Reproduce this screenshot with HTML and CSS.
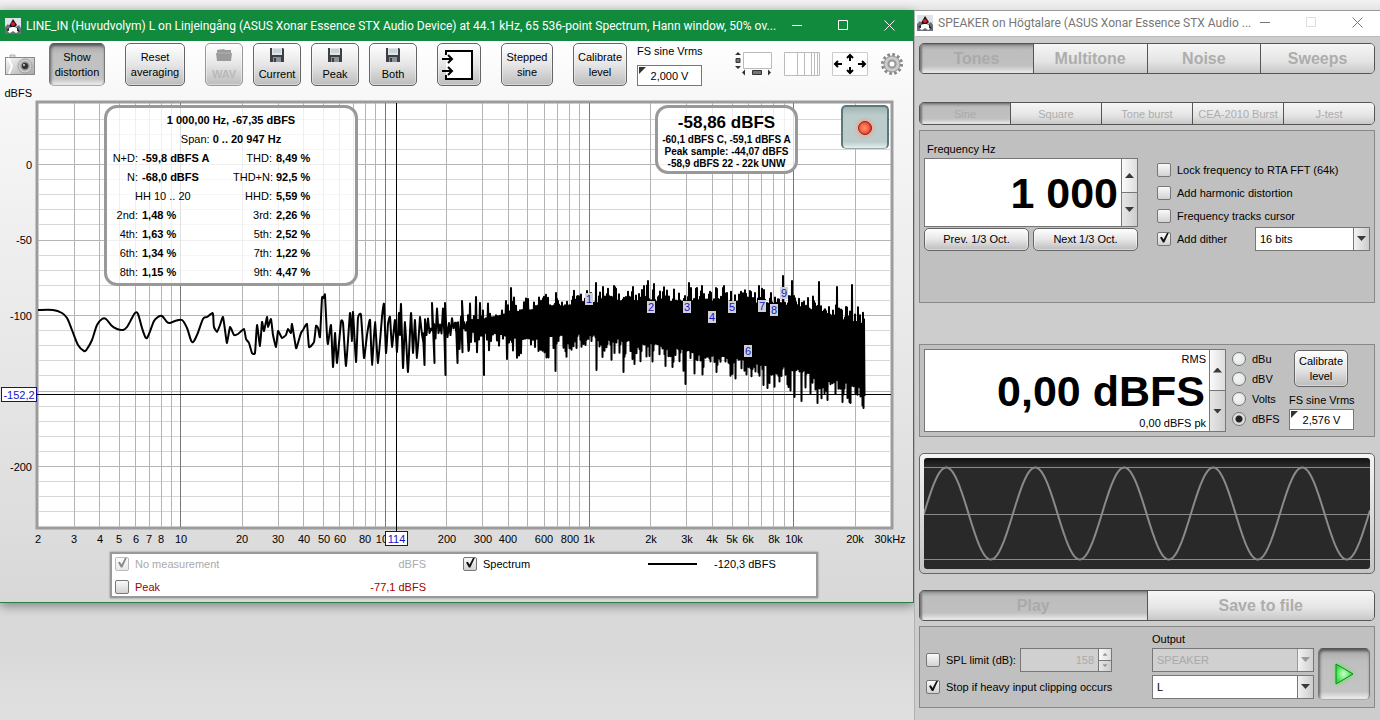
FILE: index.html
```html
<!DOCTYPE html>
<html lang="sv">
<head>
    <meta charset="UTF-8">
    <meta name="viewport" content="width=device-width, initial-scale=1.0">
    <title>RTA and generator</title>
    <link rel="stylesheet" href="styles.css">
</head>
<body>
<svg width="0" height="0" class="defs" aria-hidden="true">
    <defs>
        <linearGradient id="silver" x1="0" y1="0" x2="1" y2="1">
            <stop offset="0" stop-color="#fafafa"/>
            <stop offset="1" stop-color="#a8a8a8"/>
        </linearGradient>
        <radialGradient id="lens">
            <stop offset="0" stop-color="#222"/>
            <stop offset="0.35" stop-color="#666"/>
            <stop offset="0.7" stop-color="#bbb"/>
            <stop offset="1" stop-color="#eee"/>
        </radialGradient>
        <radialGradient id="led" cx="0.45" cy="0.5">
            <stop offset="0" stop-color="#ff9a80"/>
            <stop offset="0.7" stop-color="#fb5a3c"/>
            <stop offset="1" stop-color="#d03a20"/>
        </radialGradient>
        <radialGradient id="go" cx="0.45" cy="0.5">
            <stop offset="0" stop-color="#c8ffc8"/>
            <stop offset="1" stop-color="#2ddc38"/>
        </radialGradient>
        <filter id="glow" x="-50%" y="-50%" width="200%" height="200%">
            <feGaussianBlur stdDeviation="2.5"/>
        </filter>
        <symbol id="duke" viewBox="0 0 16 16">
            <rect width="16" height="16" fill="#dfe2e8"/>
            <path d="M0 9 3 6 5 9 11 9 14 7 16 10V16H0z" fill="#6d7078"/>
            <path d="M4 8 8 1l4 6-2 2H5z" fill="#15151a"/>
            <path d="M3 14q0-5 5-5 5 0 5 5l-2 1-3-2-3 2z" fill="#fff"/>
            <path d="M1 12l3-2v3zM12 9l3 5-3-1z" fill="#222"/>
            <circle cx="8" cy="6" r="2" fill="#d81c28"/>
        </symbol>
        <symbol id="disk" viewBox="0 0 14 14">
            <path d="M0 0h13l1 1v13H0z" fill="#3c3f44"/>
            <path d="M2 0h10v7H2z" fill="#dfe6ea"/>
            <path d="M3 2h8M3 4h8" stroke="#b5bfc6"/>
            <path d="M3 9h8v5H3z" fill="#8b9096"/>
            <path d="M4 10h2v4H4z" fill="#3c3f44"/>
        </symbol>
    </defs>
</svg>

<div class="desktop">
    <section class="window rta">
        <header class="titlebar green">
            <svg class="app-icon"><use href="#duke"/></svg>
            <span class="title">LINE_IN (Huvudvolym) L on Linjeingång (ASUS Xonar Essence STX Audio Device) at 44.1 kHz, 65 536-point Spectrum, Hann window, 50% ov...</span>
            <div class="win-buttons">
                <button aria-label="Minimize"><svg width="11" height="11"><path d="M0 5.5h10"/></svg></button>
                <button aria-label="Maximize"><svg width="11" height="11"><path d="M.5.5h9v9h-9z"/></svg></button>
                <button aria-label="Close"><svg width="11" height="11"><path d="M.5.5l10 10M10.500.5l-10 10"/></svg></button>
            </div>
        </header>

        <div class="toolbar">
            <button class="icon-btn camera" aria-label="Capture graph">
                <svg width="30" height="22" viewBox="0 0 30 22">
                    <path d="M5 1h5v3H5z" fill="#ddd" stroke="#999" stroke-width=".7"/>
                    <rect x=".5" y="3.500" width="29" height="17" fill="url(#silver)" stroke="#888"/>
                    <path d="M3 4l4 8-3 8" fill="none" stroke="#fff" stroke-width="2"/>
                    <circle cx="20" cy="12" r="7" fill="url(#lens)" stroke="#999"/>
                    <circle cx="20" cy="12" r="3" fill="#333"/>
                    <circle cx="19" cy="11" r="1" fill="#ddd"/>
                </svg>
            </button>
            <button class="btn pressed show">Show<br>distortion</button>
            <button class="btn reset">Reset<br>averaging</button>
            <div class="group">
                <button class="btn wav" disabled>
                    <svg width="16" height="14" viewBox="0 0 16 14"><path d="M1 2l7-1 1 1h6v3h1l-1 8H1L0 5h1z" fill="#9b9b9b"/><path d="M1 5h14" stroke="#b2b2b2"/></svg>
                    WAV
                </button>
                <button class="btn save"><svg width="14" height="14"><use href="#disk"/></svg>Current</button>
                <button class="btn save"><svg width="14" height="14"><use href="#disk"/></svg>Peak</button>
                <button class="btn save"><svg width="14" height="14"><use href="#disk"/></svg>Both</button>
            </div>
            <button class="btn io" aria-label="Input settings">
                <svg width="36" height="32" viewBox="0 0 36 32" fill="none" stroke="#000">
                    <path d="M5 2h26v28H5z" fill="#fff" stroke="none"/>
                    <path d="M5 6V2h26v28H5v-4" stroke-width="2"/>
                    <path d="M1 10h10M7 6l4 4-4 4M1 22h10M7 18l4 4-4 4" stroke-width="2"/>
                </svg>
            </button>
            <button class="btn stepped">Stepped<br>sine</button>
            <div class="group">
                <button class="btn calibrate">Calibrate<br>level</button>
                <div class="vrms">
                    <label for="fs-in">FS sine Vrms</label>
                    <span class="corner"><input id="fs-in" type="text" value="2,000 V"></span>
                </div>
            </div>
            <div class="view-icons">
                <button class="icon-btn" aria-label="Scrollbars">
                    <svg width="37" height="24" viewBox="0 0 37 24">
                        <path d="M8.500.5h28v16h-28z" fill="#fff" stroke="#bbb"/>
                        <path d="M3 0l3 3H0zM3 17l3-3H0zM7 20.500l3-3v6zM36 20.500l-3-3v6z" fill="#333"/>
                        <path d="M1 6.500h4v4H1zM17.500 18.500h9v4h-9z" fill="#777" stroke="#333"/>
                    </svg>
                </button>
                <button class="icon-btn" aria-label="Frequency axis">
                    <svg width="36" height="24"><path d="M.5.5h35v23H.5z" fill="#fff" stroke="#bbb"/><path d="M13.500 1v22M20.500 1v22M27.500 1v22M30.500 1v22M33.500 1v22" stroke="#bbb"/></svg>
                </button>
                <button class="icon-btn" aria-label="Graph limits">
                    <svg width="36" height="24" fill="none"><path d="M.5.5h35v23H.5z" fill="#fff" stroke="#ccc"/><path d="M18 3v6M15 6l3-3 3 3M18 21v-6M15 18l3 3 3-3M3 12h7M6 9l-3 3 3 3M33 12h-7M30 9l3 3-3 3" stroke="#000" stroke-width="2"/></svg>
                </button>
                <button class="icon-btn" aria-label="Controls">
                    <svg width="24" height="24" viewBox="-12 -12 24 24">
                        <circle r="9.500" fill="none" stroke="#888" stroke-width="3" stroke-dasharray="2.700 2.270"/>
                        <circle r="8" fill="#c4c4c4" stroke="#999"/>
                        <circle r="6" fill="none" stroke="#ccc" stroke-width="2"/>
                        <circle r="3.500" fill="#fff" stroke="#999" stroke-width="2"/>
                    </svg>
                </button>
            </div>
        </div>

        <div class="chart">
            <svg id="graph"></svg>
            <table class="info distortion">
                <colgroup><col class="name"><col class="left-val"><col class="name2"><col></colgroup>
                <tr><td colspan="4" class="mid"><b>1 000,00 Hz, -67,35 dBFS</b></td></tr>
                <tr><td colspan="4" class="mid">Span: <b>0 .. 20 947 Hz</b></td></tr>
                <tr><th>N+D:</th><td>-59,8 dBFS A</td><th>THD:</th><td>8,49 %</td></tr>
                <tr><th>N:</th><td>-68,0 dBFS</td><th>THD+N:</th><td>92,5 %</td></tr>
                <tr><th colspan="2" class="hh">HH 10 .. 20</th><th>HHD:</th><td>5,59 %</td></tr>
                <tr><th>2nd:</th><td>1,48 %</td><th>3rd:</th><td>2,26 %</td></tr>
                <tr><th>4th:</th><td>1,63 %</td><th>5th:</th><td>2,52 %</td></tr>
                <tr><th>6th:</th><td>1,34 %</td><th>7th:</th><td>1,22 %</td></tr>
                <tr><th>8th:</th><td>1,15 %</td><th>9th:</th><td>4,47 %</td></tr>
            </table>
            <div class="info level">
                <strong>-58,86 dBFS</strong>
                <span>-60,1 dBFS C, -59,1 dBFS A</span>
                <span>Peak sample: -44,07 dBFS</span>
                <span>-58,9 dBFS 22 - 22k UNW</span>
            </div>
            <button class="record" aria-label="Record">
                <svg width="22" height="22" viewBox="-11 -11 22 22"><circle r="8.500" fill="#e9a58f" filter="url(#glow)"/><circle r="6.500" fill="url(#led)" stroke="#8f2a1a"/></svg>
            </button>
        </div>

        <div class="legend">
            <label class="muted"><input type="checkbox" checked disabled>No measurement</label>
            <span class="muted value">dBFS</span>
            <label><input type="checkbox" checked>Spectrum</label>
            <span class="swatch"></span>
            <span>-120,3 dBFS</span>
            <label class="peak"><input type="checkbox">Peak</label>
            <span class="peak value">-77,1 dBFS</span>
        </div>
    </section>

    <section class="window generator">
        <header class="titlebar">
            <svg class="app-icon"><use href="#duke"/></svg>
            <span class="title">SPEAKER on Högtalare (ASUS Xonar Essence STX Audio ...</span>
            <div class="win-buttons">
                <button aria-label="Minimize"><svg width="11" height="11"><path d="M0 5.500h10"/></svg></button>
                <button aria-label="Maximize" disabled><svg width="11" height="11"><path d="M.5.5h9v9h-9z"/></svg></button>
                <button aria-label="Close"><svg width="11" height="11"><path d="M.5.5l10 10M10.500.5l-10 10"/></svg></button>
            </div>
        </header>

        <div class="gen-body">
            <div class="tabs big">
                <button class="on" disabled>Tones</button>
                <button disabled>Multitone</button>
                <button disabled>Noise</button>
                <button disabled>Sweeps</button>
            </div>
            <div class="tabs small">
                <button class="on" disabled>Sine</button>
                <button disabled>Square</button>
                <button disabled>Tone burst</button>
                <button disabled>CEA-2010 Burst</button>
                <button disabled>J-test</button>
            </div>

            <div class="panel tone">
                <div class="freq">
                    <label for="freq">Frequency Hz</label>
                    <div class="field">
                        <input id="freq" type="text" value="1 000">
                        <div class="spin"><button aria-label="Up"></button><button aria-label="Down"></button></div>
                    </div>
                    <div class="oct">
                        <button class="btn">Prev. 1/3 Oct.</button>
                        <button class="btn">Next 1/3 Oct.</button>
                    </div>
                </div>
                <div class="options">
                    <label><input type="checkbox">Lock frequency to RTA FFT (64k)</label>
                    <label><input type="checkbox">Add harmonic distortion</label>
                    <label><input type="checkbox">Frequency tracks cursor</label>
                    <div class="dither">
                        <label><input type="checkbox" checked>Add dither</label>
                        <span class="select"><select aria-label="Dither bits"><option>16 bits</option></select></span>
                    </div>
                </div>
            </div>

            <div class="panel output-level">
                <div class="field">
                    <div class="readout">
                        <label for="rms">RMS</label>
                        <input id="rms" type="text" value="0,00 dBFS">
                        <span>0,00 dBFS pk</span>
                    </div>
                    <div class="spin"><button aria-label="Up"></button><button aria-label="Down"></button></div>
                </div>
                <div class="units">
                    <label><input type="radio" name="unit">dBu</label>
                    <label><input type="radio" name="unit">dBV</label>
                    <label><input type="radio" name="unit">Volts</label>
                    <label><input type="radio" name="unit" checked>dBFS</label>
                </div>
                <div class="cal">
                    <button class="btn">Calibrate<br>level</button>
                    <label for="fs-out">FS sine Vrms</label>
                    <span class="corner"><input id="fs-out" type="text" value="2,576 V"></span>
                </div>
            </div>

            <div class="scope">
                <svg id="wave" viewBox="0 0 446 111" preserveAspectRatio="none"></svg>
            </div>

            <div class="tabs big play-tabs">
                <button class="on" disabled>Play</button>
                <button disabled>Save to file</button>
            </div>

            <div class="panel transport">
                <div class="limits">
                    <div class="spl">
                        <label><input type="checkbox">SPL limit (dB):</label>
                        <div class="field off">
                            <input type="text" value="158" aria-label="SPL limit" disabled>
                            <div class="spin"><button aria-label="Up" disabled></button><button aria-label="Down" disabled></button></div>
                        </div>
                    </div>
                    <label><input type="checkbox" checked>Stop if heavy input clipping occurs</label>
                </div>
                <div class="outputs">
                    <label for="dev">Output</label>
                    <span class="select off"><select id="dev" disabled><option>SPEAKER</option></select></span>
                    <span class="select"><select aria-label="Channel"><option>L</option></select></span>
                </div>
                <button class="btn pressed play" aria-label="Play">
                    <svg width="36" height="36" viewBox="0 0 36 36"><path d="M10 7l18 11-18 11z" fill="#60e060" filter="url(#glow)"/><path d="M10 8l17 10-17 10z" fill="url(#go)" stroke="#0f8a1c"/></svg>
                </button>
            </div>
        </div>
    </section>
</div>
<script src="graph.js"></script>
</body>
</html>
```
FILE: styles.css
```css
* {
    box-sizing: border-box;
}

body {
    margin: 0;
    background: #d9d9d9;
    font-family: "Liberation Sans", Arial, sans-serif;
    font-size: 11px;
    line-height: 14px;
    color: #000;
    overflow: hidden;
}

button, input, select {
    font: inherit;
    color: inherit;
    margin: 0;
    padding: 0;
}

.defs {
    position: absolute;
}

.desktop {
    display: grid;
    grid-template-columns: minmax(0, 1fr) 466px;
    align-items: start;
    height: 100vh;
    padding-top: 10px;
    background: linear-gradient(#f2f2f2, #e4e4e4 10px, #d9d9d9 90%, #e0e0e0);
}

/* Windows */
.window {
    display: flex;
    flex-direction: column;
}

.rta {
    height: calc(100vh - 127px);
    border: solid #2a7f48;
    border-width: 0 1px 1px 0;
    background: linear-gradient(#fff 30px, #f8f8f8 80px, #d8d8d8 100%);
    box-shadow: 0 3px 10px rgba(0, 0, 0, 0.4);
}

.generator {
    height: 100%;
    background: #cdcdcd;
    border-left: 1px solid #b0b0b0;
    border-top: 1px solid #999;
}

.titlebar {
    display: flex;
    align-items: center;
    height: 26px;
    padding-left: 2px;
    background: #fff;
    color: #777;
    font-family: Roboto, "Open Sans", sans-serif;
    font-size: 12px;
    border-bottom: 1px solid #bbb;
}

.generator .titlebar {
    padding-bottom: 2px;
}

.titlebar.green {
    height: 31px;
    padding-left: 5px;
    background: #128a3e;
    color: #fff;
    border: 0;
}

.app-icon {
    flex: none;
    width: 16px;
    height: 16px;
}

.title {
    flex: 1;
    min-width: 0;
    margin-left: 5px;
    white-space: nowrap;
}

.win-buttons {
    display: flex;
    gap: 10px;
    padding-right: 5px;
}

.green .win-buttons {
    padding-right: 6px;
}

.win-buttons button {
    display: grid;
    place-items: center;
    width: 36px;
    height: 24px;
    border: 0;
    background: none;
}

.win-buttons svg {
    fill: none;
    stroke: currentColor;
}

.win-buttons button:disabled {
    color: #ddd;
}

/* Buttons */
.btn {
    border: 1px solid #666;
    border-radius: 5px;
    background: linear-gradient(#fff, #e6e6e6 50%, #bcbcbc);
    box-shadow: inset 0 0 0 1px rgba(255, 255, 255, 0.4);
    line-height: 15px;
    white-space: nowrap;
}

.btn.pressed {
    border-color: #555 #777 #aaa;
    background: linear-gradient(#a8a8a8, #bfbfbf 25%, #c4c4c4 85%, #eee);
    box-shadow: inset 1px 2px 3px rgba(0, 0, 0, 0.5);
}

.btn:disabled {
    color: #b8b8b8;
    border-color: #999;
}

.icon-btn {
    display: block;
    border: 0;
    background: none;
}

.icon-btn svg {
    display: block;
}

/* Toolbar */
.toolbar {
    display: flex;
    align-items: flex-start;
    gap: 20px;
    height: 47px;
    padding: 2px 9px 0 5px;
}

.toolbar .btn {
    flex: none;
    height: 43px;
}

.camera {
    margin: 11px -6px 0 0;
}

.group {
    display: flex;
    gap: 10px;
}

.show { width: 56px; }
.reset { width: 60px; }
.toolbar .wav { width: 38px; font-weight: bold; }
.save { width: 48px; }
.io { width: 44px; }
.stepped { width: 52px; }
.calibrate { width: 54px; }

.wav, .save {
    display: flex;
    flex-direction: column;
    align-items: center;
    justify-content: center;
    gap: 5px;
}

.io svg {
    display: block;
    margin: auto;
}

.vrms {
    width: 65px;
}

.vrms label {
    display: block;
    margin: 1px 0 7px;
    white-space: nowrap;
}

.corner {
    position: relative;
    display: block;
}

.corner::before {
    content: "";
    position: absolute;
    left: 2px;
    top: 2px;
    width: 7px;
    height: 7px;
    background: #333;
    clip-path: polygon(0 0, 100% 0, 0 100%);
}

.corner input {
    display: block;
    width: 65px;
    height: 21px;
    border: 1px solid #777;
    background: #fff;
    text-align: center;
}

.view-icons {
    display: flex;
    gap: 12px;
    margin: 9px 0 0 auto;
}

/* Graph */
.chart {
    position: relative;
    flex: 1;
    min-height: 0;
}

#graph {
    display: block;
    width: 100%;
    height: 100%;
}

.info {
    position: absolute;
    top: 17px;
    border: 3px solid #999;
    border-radius: 13px;
    background: rgba(255, 255, 255, 0.78);
}

.distortion {
    left: 104px;
    width: 254px;
    height: 181px;
    padding: 2px 0;
    border-spacing: 0;
    table-layout: fixed;
}

.distortion td, .distortion th {
    height: 19px;
    padding: 0;
    font-weight: normal;
    text-align: right;
    white-space: nowrap;
}

.distortion td {
    padding-left: 4px;
    font-weight: bold;
    text-align: left;
}

.distortion .mid {
    padding: 0;
    font-weight: normal;
    text-align: center;
}

.distortion .name { width: 31px; }
.distortion .left-val { width: 95px; }
.distortion .name2 { width: 39px; }

.distortion .hh {
    padding-left: 28px;
    text-align: left;
}

.level {
    right: 115px;
    width: 143px;
    height: 69px;
    padding-top: 6px;
    display: flex;
    flex-direction: column;
    align-items: center;
    font-size: 10px;
    font-weight: bold;
    line-height: 12px;
    white-space: nowrap;
}

.level strong {
    font-size: 17px;
    line-height: 18px;
    margin-bottom: 2px;
}

.record {
    position: absolute;
    top: 17px;
    right: 24px;
    width: 48px;
    height: 44px;
    border: 2px solid #5c7878;
    border-bottom: 1px solid #99aaaa;
    border-radius: 5px;
    background: linear-gradient(#9fb3b3, #bccccc 20%, #bccccc 85%, #e6eeee);
}

.record svg {
    display: block;
    margin: auto;
}

/* Checkboxes and radios */
label {
    display: flex;
    align-items: center;
    white-space: nowrap;
}

input[type="checkbox"], input[type="radio"] {
    appearance: none;
    position: relative;
    flex: none;
    width: 14px;
    height: 14px;
    margin-right: 6px;
    border: 1px solid #777;
    border-radius: 2px;
    background: linear-gradient(#fafafa, #d2d2d2);
}

input[type="checkbox"]:checked::after {
    content: "";
    position: absolute;
    left: 2px;
    top: 0;
    width: 9px;
    height: 10px;
    background: #111;
    clip-path: polygon(0 50%, 20% 42%, 40% 70%, 80% 0, 100% 0, 48% 100%, 32% 100%);
}

input[type="checkbox"]:disabled {
    opacity: 0.5;
}

input[type="radio"] {
    border-radius: 50%;
    background: radial-gradient(circle at 40% 40%, #f4f6f7, #dcdfe1);
}

input[type="radio"]:checked {
    background: radial-gradient(circle, #222 3px, #ddd 4px);
}

.legend {
    display: grid;
    grid-template-columns: 220px 91px 222px 49px 1fr;
    grid-auto-rows: 23px;
    align-items: center;
    align-content: center;
    height: 46px;
    margin: 4px 95px 4px 110px;
    padding: 0 3px;
    border: 2px solid #999;
    background: #fff;
    box-shadow: 0 0 2px #888;
}

.legend label:nth-of-type(2) {
    margin-left: 37px;
}

.legend .value {
    text-align: right;
}

.muted { color: #aaa; }
.peak { color: #a00000; }

.swatch {
    height: 2px;
    background: #000;
}

.swatch + span {
    padding-left: 17px;
}

/* Generator */
.gen-body {
    display: flex;
    flex-direction: column;
    padding: 6px 5px 0 4px;
}

.tabs {
    display: flex;
    border: 1px solid #555;
    border-radius: 5px;
    overflow: hidden;
}

.tabs button {
    flex: 1;
    border: 0;
    border-left: 1px solid #555;
    background: linear-gradient(#f6f6f6, #e4e4e4 60%, #c8c8c8);
    color: #adadad;
    white-space: nowrap;
}

.tabs button:first-child {
    border-left: 0;
}

.tabs .on {
    background: linear-gradient(#999, #bdbdbd 20%, #c0c0c0 75%, #ececec);
    box-shadow: inset 2px 1px 2px #777;
    color: #aaa;
}

.big {
    height: 31px;
    font-size: 16px;
    font-weight: bold;
}

.small {
    height: 23px;
    margin: 28px 0 5px;
}

.panel {
    display: flex;
    padding: 4px;
    border: 1px solid #888;
    background: #c0c0c0;
}

.field {
    display: flex;
    border: 1px solid #777;
    background: #fff;
}

.field input {
    flex: 1;
    min-width: 0;
    width: 100%;
    border: 0;
    background: none;
    text-align: right;
}

.spin {
    display: flex;
    flex-direction: column;
    width: 16px;
    border-left: 1px solid #777;
}

.spin button {
    flex: 1;
    display: grid;
    place-items: center;
    border: 0;
    background: linear-gradient(90deg, #fafafa, #dedede);
}

.spin button + button {
    border-top: 1px solid #777;
    background: linear-gradient(90deg, #e6e6e6, #cdcdcd);
}

.spin button::before, .select::after {
    content: "";
    width: 9px;
    height: 5px;
    background: #3a3a3a;
    clip-path: polygon(50% 0, 100% 100%, 0 100%);
}

.spin button + button::before, .select::after {
    clip-path: polygon(0 0, 100% 0, 50% 100%);
}

.select {
    position: relative;
    display: block;
}

.select::after {
    position: absolute;
    right: 4px;
    top: 9px;
}

.select select {
    appearance: none;
    display: block;
    width: 100%;
    height: 24px;
    padding: 0 20px 0 4px;
    border: 1px solid #777;
    border-radius: 0;
    background: linear-gradient(90deg, #fff calc(100% - 16px), #777 calc(100% - 16px), #777 calc(100% - 15px), #f2f2f2 calc(100% - 15px), #ccc);
    opacity: 1;
}

.select.off select {
    color: #aaa;
    background: linear-gradient(90deg, #d0d0d0 calc(100% - 16px), #999 calc(100% - 16px), #999 calc(100% - 15px), #f2f2f2 calc(100% - 15px), #d0d0d0);
}

.off.select::after, .off .spin button::before {
    background: #999;
}

.tone {
    height: 173px;
}

.freq {
    width: 214px;
}

.freq label {
    margin: 7px 0 2px 3px;
}

.freq .field {
    height: 69px;
}

.field #freq, .field #rms {
    padding-right: 3px;
    font-size: 43px;
    line-height: 48px;
    font-weight: bold;
}

.oct {
    display: grid;
    grid-template-columns: 1fr 1fr;
    gap: 4px;
    margin-top: 1px;
}

.oct .btn {
    height: 23px;
}

.options {
    flex: 1;
    margin: 23px 0 0 19px;
}

.options label {
    height: 23px;
}

.dither {
    display: flex;
    justify-content: space-between;
}

.dither .select {
    width: 115px;
}

.output-level {
    height: 93px;
    margin-top: 41px;
}

.output-level .field {
    width: 302px;
}

.readout {
    flex: 1;
    display: flex;
    flex-direction: column;
    align-items: flex-end;
    padding: 2px 3px 0 0;
}

.field #rms {
    padding: 0 1px 0 0;
    height: 50px;
    flex: none;
}

.units {
    width: 57px;
    margin-left: 6px;
}

.units label {
    height: 20px;
}

.cal .btn {
    display: block;
    width: 54px;
    height: 37px;
    margin: 1px 5px 6px;
}

.cal label {
    margin-bottom: 2px;
}

.scope {
    height: 121px;
    margin: 16px 0;
    padding: 4px;
    border: 1px solid #666;
    border-radius: 5px;
    background: linear-gradient(#f4f4f4, #c4c4c4);
}

.scope svg {
    display: block;
    width: 100%;
    height: 100%;
    border-radius: 3px;
    background: linear-gradient(#111, #292929 8px);
}

.scope path {
    fill: none;
    stroke: #8a8a8a;
}

.transport {
    height: 82px;
    margin-top: 5px;
    justify-content: space-between;
}

.limits {
    width: 224px;
    padding: 17px 0 0 2px;
}

.spl {
    display: flex;
    justify-content: space-between;
    width: 186px;
    margin-bottom: 8px;
}

.spl .field {
    width: 92px;
    height: 24px;
    background: #d0d0d0;
    color: #aaa;
}

.spl .field input {
    padding-right: 4px;
}

.spl .spin {
    width: 13px;
}

.spl .spin button::before {
    width: 5px;
    height: 3px;
}

.outputs {
    width: 162px;
}

.outputs label {
    margin: 1px 0 2px;
}

.outputs .select + .select {
    margin-top: 3px;
}

.play {
    width: 52px;
    height: 52px;
    margin-top: 17px;
}

.play svg {
    display: block;
    margin: auto;
}

/* Graph drawing */
#graph text {
    font-size: 11px;
    text-anchor: middle;
}

#graph .db {
    text-anchor: end;
}

#graph path {
    fill: none;
}

#graph .minor { stroke: #d6d6d6; }
#graph .major { stroke: #b4b4b4; }
#graph .decade { stroke: #777; }
#graph .cursor { stroke: #000; }
#graph .trace { stroke: #000; stroke-width: 2; stroke-linejoin: round; }
#graph .frame { fill: #fff; stroke: #9c9c9c; stroke-width: 3; }
#graph .tag { fill: #fff; stroke: #10109a; }
#graph .mark { fill: #d0d0da; }
#graph .blue { fill: #1414c8; }
```
FILE: graph.js
```javascript
var NS = 'http://www.w3.org/2000/svg';
var graph = document.getElementById('graph');

// low frequency part of the spectrum, x/y in plot units
var low = [0,207, 15,207, 24,210, 29,215, 34,227, 40,242, 46,248, 49,246, 54,237, 59,222, 64,216, 68,216,
    74,223, 79,226, 85,227, 89,224, 94,215, 97,210, 100,211, 104,225, 108,235, 111,231, 116,218, 120,214,
    124,213, 129,219, 132,220, 137,218, 144,217, 149,225, 154,239, 159,232, 165,216, 169,214, 173,211,
    175,211, 176,224, 179,229, 182,222, 185,214, 187,227, 189,240, 192,224, 196,232, 200,231, 206,226,
    208,236, 211,240, 214,250, 217,250, 219,222, 222,243, 224,219, 226,228, 229,214, 230,224, 233,216,
    235,232, 238,244, 240,228, 244,235, 248,232, 250,226, 253,230, 254,221, 258,245, 260,240, 263,230,
    265,227, 269,221, 271,244, 276,239, 278,223, 280,225, 282,234, 284,195, 286,195, 287,192, 289,233,
    290,241, 293,222, 295,264, 297,230, 299,260, 303,219, 305,220, 308,263, 312,210, 314,238, 315,209,
    318,259, 320,215, 323,212, 326,255, 329,232, 332,217, 334,262, 337,219, 340,260, 344,214, 346,201,
    348,250, 350,221, 352,214, 354,244, 357,217, 359,249, 361,210, 362,232, 363,201, 365,265, 367,219,
    370,269, 373,210, 375,250, 377,217, 379,255, 382,214];

// x, upper edge, lower edge of the noise band
var band = [[382,218,242], [405,208,238], [430,209,236], [462,206,238], [495,202,242], [529,198,236],
    [562,195,238], [595,193,244], [629,194,248], [662,193,256], [695,196,260], [729,196,268],
    [762,199,271], [795,211,282], [826,216,290]];
var peaks = {394:200, 407:200, 424:198, 438:194, 473:185, 558:180, 576:183, 610:178, 616:181, 651:180,
    664:183, 686:183, 721:183, 745:173, 754:178, 781:179, 799:184, 814:182};
var dips = {385:262, 395:260, 406:272, 418:260, 445:272, 468:256, 517:268, 558:267, 585:269, 647:281,
    678:269, 725:282, 756:294, 763:298, 779:300, 789:297, 804:299, 812:300, 825:305};

// fundamental and harmonics: label, Hz, y
var marks = [[1,1000,196], [2,2000,204], [3,3000,204], [4,4000,214], [5,5000,204], [6,6000,248],
    [7,7000,203], [8,8000,207], [9,9000,190]];

function add(tag, attrs, text) {
    var el = document.createElementNS(NS, tag);
    for (var k in attrs) el.setAttribute(k, attrs[k]);
    if (text !== undefined) el.textContent = text;
    graph.appendChild(el);
    return el;
}

function noisePath(X, Y) {
    var seed = 7;
    function rnd() {
        seed = (seed * 16807) % 2147483647;
        return seed / 2147483647;
    }
    var d = 'M' + X(low[0]) + ' ' + Y(low[1]);
    var i, n = low.length;
    for (i = 0; i < n - 2; i += 2) {
        // Catmull-Rom through the measured bins
        var p = [Math.max(i - 2, 0), i, i + 2, Math.min(i + 4, n - 2)];
        var k = low[i] < 176 ? 6 : 14;
        d += 'C' + [X(low[p[1]] + (low[p[2]] - low[p[0]]) / k), Y(low[p[1] + 1] + (low[p[2] + 1] - low[p[0] + 1]) / k),
            X(low[p[2]] - (low[p[3]] - low[p[1]]) / k), Y(low[p[2] + 1] - (low[p[3] + 1] - low[p[1] + 1]) / k),
            X(low[p[2]]), Y(low[p[2] + 1])].join(' ');
    }
    var b = 0;
    for (var x = 383; x <= 826; x++) {
        while (x > band[b + 1][0]) b++;
        var t = (x - band[b][0]) / (band[b + 1][0] - band[b][0]);
        var top = band[b][1] + t * (band[b + 1][1] - band[b][1]);
        var bot = band[b][2] + t * (band[b + 1][2] - band[b][2]);
        var loose = x < 480 ? (480 - x) / 100 : 0;
        var a = rnd(), c = rnd();
        // long tails both ways, most bins stay near the edge
        top += 5 + loose * 10 - a * a * a * (16 + loose * 10);
        bot += c * c * c * 24 - 6 - loose * 10 * rnd();
        if (peaks[x]) top = peaks[x];
        if (dips[x]) bot = dips[x];
        var step = x < 430 ? 3 : x < 500 ? 2 : 1;
        if (x % step && !peaks[x] && !dips[x]) continue;
        d += 'L' + X(x) + ' ' + Y(top) + 'L' + X(x + step / 2) + ' ' + Y(bot);
    }
    return d;
}

function draw() {
    graph.textContent = '';
    var left = 38, top = 15;
    var w = graph.clientWidth - left - 22;
    var h = graph.clientHeight - top - 21;
    function X(x) { return +(left + x * w / 853).toFixed(1); }
    function Y(y) { return +(top + y * h / 424).toFixed(1); }
    function fx(f) { return X(853 * Math.log10(f / 2) / Math.log10(15000)); }
    function dy(db) { return Y(61.5 - 1.51 * db); }
    function px(v) { return Math.floor(v) + 0.5; }

    add('rect', {'class': 'frame', x: left - 1, y: top - 1, width: w + 2, height: h + 2});

    var db, f;
    for (db = 30; db > -240; db -= 10) {
        add('path', {'class': db % 50 ? 'minor' : 'major', d: 'M' + left + ' ' + px(dy(db)) + 'H' + (left + w)});
    }
    [0, -50, -100, -200].forEach(function (v) {
        add('text', {'class': 'db', x: 32, y: Math.round(dy(v)) + 4}, v);
    });
    for (var dec = 1; dec <= 10000; dec *= 10) {
        for (var m = 1; m < 10; m++) {
            f = dec * m;
            if (f <= 2 || f >= 30000) continue;
            add('path', {'class': m === 1 ? 'decade' : 'major', d: 'M' + px(fx(f)) + ' ' + top + 'V' + (top + h)});
        }
    }
    add('path', {'class': 'trace', d: noisePath(X, Y)});

    var ticks = [2, 3, 4, 5, 6, 7, 8, 10, 20, 30, 40, 50, 60, 80, 100, 200, 300, 400, 600, 800,
        1000, 2000, 3000, 4000, 5000, 6000, 8000, 10000, 20000];
    var base = top + h + 16;
    ticks.forEach(function (v) {
        add('text', {x: Math.round(fx(v)), y: base}, v >= 1000 ? v / 1000 + 'k' : v);
    });
    add('text', {x: left + w - 1, y: base}, '30kHz');
    add('text', {'class': 'db', x: 32, y: 9}, 'dBFS');

    marks.forEach(function (m) {
        var x = Math.round(fx(m[1])), y = Math.round(Y(m[2]));
        add('rect', {'class': 'mark', x: x - 4, y: y - 6, width: 8, height: 12});
        add('text', {'class': 'blue', x: x, y: y + 4}, m[0]);
    });

    // crosshair with its two value tags
    var cx = px(fx(114)), cy = px(dy(-152.2));
    add('path', {'class': 'cursor', d: 'M' + cx + ' ' + top + 'V' + (top + h + 4) + 'M' + 36 + ' ' + cy + 'H' + (left + w)});
    add('rect', {'class': 'tag', x: 1.5, y: cy - 7, width: 35, height: 14});
    add('text', {'class': 'blue', x: 19, y: cy + 4}, '-152,2');
    add('rect', {'class': 'tag', x: cx - 11, y: top + h + 4.5, width: 22, height: 14});
    add('text', {'class': 'blue', x: cx, y: base}, '114');
}

function drawWave() {
    var wave = document.getElementById('wave');
    var d = 'M0 56';
    for (var x = 0; x <= 446; x++) d += 'L' + x + ' ' + (55.5 - 46 * Math.sin(x * 2 * Math.PI / 89)).toFixed(1);
    wave.innerHTML = '<path d="M0 9.5H446M0 56.5H446M0 101.5H446"/><path stroke-width="2" d="' + d + '"/>';
}

draw();
drawWave();
window.addEventListener('resize', draw);
```
